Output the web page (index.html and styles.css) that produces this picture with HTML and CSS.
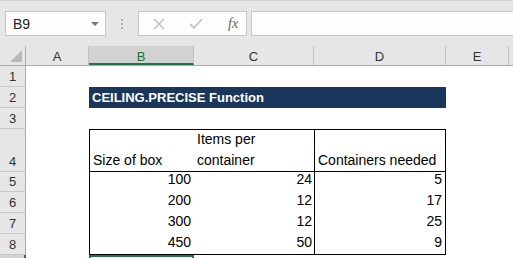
FILE: index.html
```html
<!DOCTYPE html>
<html lang="en">
<head>
    <meta charset="UTF-8">
    <title>CEILING.PRECISE Function</title>
    <link rel="stylesheet" href="styles.css">
</head>
<body>
    <div class="toolbar">
        <div class="name-box">
            <span>B9</span>
            <span class="caret"></span>
        </div>
        <div class="grip"><i></i><i></i><i></i></div>
        <div class="fn-box">
            <svg width="14" height="14" viewBox="0 0 14 14"><path d="M2 2 L12 12 M12 2 L2 12" stroke="#c4c4c4" stroke-width="1.6" fill="none"/></svg>
            <svg width="16" height="14" viewBox="0 0 16 14"><path d="M2 7 L6 11 L14 2" stroke="#c4c4c4" stroke-width="1.8" fill="none"/></svg>
            <span class="fx">fx</span>
        </div>
        <div class="formula"></div>
    </div>

    <div class="sheet">
        <div class="row head">
            <div class="rh corner"><span class="tri"></span></div>
            <div class="ch col-a">A</div>
            <div class="ch col-b active">B</div>
            <div class="ch col-c">C</div>
            <div class="ch col-d">D</div>
            <div class="ch col-e">E</div>
            <div class="ch rest"></div>
        </div>
        <div class="row">
            <div class="rh">1</div>
        </div>
        <div class="row">
            <div class="rh">2</div>
            <div class="col-a"></div>
            <div class="title">CEILING.PRECISE Function</div>
        </div>
        <div class="row">
            <div class="rh">3</div>
        </div>
        <div class="row tall">
            <div class="rh">4</div>
            <div class="col-a"></div>
            <div class="cell col-b top first">Size of box</div>
            <div class="cell col-c top">Items per<br>container</div>
            <div class="cell col-d top last">Containers needed</div>
        </div>
        <div class="row short">
            <div class="rh">5</div>
            <div class="col-a"></div>
            <div class="cell col-b num first">100</div>
            <div class="cell col-c num">24</div>
            <div class="cell col-d num last">5</div>
        </div>
        <div class="row">
            <div class="rh">6</div>
            <div class="col-a"></div>
            <div class="cell col-b num first">200</div>
            <div class="cell col-c num">12</div>
            <div class="cell col-d num last">17</div>
        </div>
        <div class="row">
            <div class="rh">7</div>
            <div class="col-a"></div>
            <div class="cell col-b num first">300</div>
            <div class="cell col-c num">12</div>
            <div class="cell col-d num last">25</div>
        </div>
        <div class="row">
            <div class="rh">8</div>
            <div class="col-a"></div>
            <div class="cell col-b num first bottom">450</div>
            <div class="cell col-c num bottom">50</div>
            <div class="cell col-d num last bottom">9</div>
        </div>
        <div class="row peek">
            <div class="rh sel"></div>
            <div class="col-a"></div>
            <div class="cell col-b picked"></div>
        </div>
    </div>
</body>
</html>
```

FILE: styles.css
```css
body {
    margin: 0;
    padding: 0;
    background-color: #ffffff;
    font-family: "Liberation Sans", Arial, sans-serif;
    overflow: hidden;
}
.toolbar {
    height: 46px;
    background-color: #e6e6e6;
    border-top: 1px solid #d4d4d4;
    box-sizing: border-box;
    display: flex;
    align-items: flex-start;
    padding-top: 10px;
    padding-left: 5px;
}
.name-box {
    width: 101px;
    height: 25px;
    box-sizing: border-box;
    background-color: #fdfdfd;
    border: 1px solid #c6c6c6;
    display: flex;
    align-items: center;
    justify-content: space-between;
    padding: 0 6px 0 7px;
    font-size: 14px;
    color: #222;
}
.caret {
    width: 0;
    height: 0;
    border-left: 4px solid transparent;
    border-right: 4px solid transparent;
    border-top: 4px solid #777;
}
.grip {
    width: 32px;
    height: 25px;
    display: flex;
    flex-direction: column;
    align-items: center;
    justify-content: center;
    gap: 2px;
}
.grip i {
    width: 2px;
    height: 2px;
    background-color: #b0b0b0;
}
.fn-box {
    width: 109px;
    height: 25px;
    box-sizing: border-box;
    background-color: #fdfdfd;
    border: 1px solid #c6c6c6;
    display: flex;
    align-items: center;
    padding-left: 13px;
    gap: 22px;
}
.fx {
    font-family: "Liberation Serif", "Times New Roman", serif;
    font-style: italic;
    font-size: 14px;
    color: #666;
    margin-left: 2px;
}
.formula {
    flex-grow: 1;
    height: 25px;
    box-sizing: border-box;
    margin-left: 4px;
    background-color: #fdfdfd;
    border: 1px solid #c6c6c6;
    border-right: none;
}
.sheet {
    display: flex;
    flex-direction: column;
}
.row {
    display: flex;
    height: 21px;
}
.row.head {
    height: 20px;
    background-color: #e6e6e6;
    border-bottom: 1px solid #ababab;
    box-sizing: border-box;
}
.row.tall {
    height: 43px;
}
.row.short {
    height: 20px;
}
.row.peek {
    height: 3px;
}
.rh {
    width: 26px;
    flex-shrink: 0;
    box-sizing: border-box;
    background-color: #e6e6e6;
    border-right: 1px solid #ababab;
    border-bottom: 1px solid #c8c8c8;
    color: #333;
    font-size: 13px;
    display: flex;
    align-items: flex-end;
    justify-content: center;
    padding-bottom: 2px;
}
.rh.corner {
    border-bottom: none;
    position: relative;
}
.tri {
    position: absolute;
    right: 3px;
    bottom: 3px;
    width: 0;
    height: 0;
    border-left: 12px solid transparent;
    border-bottom: 12px solid #b9b9b9;
}
.rh.sel {
    background-color: #d2d2d2;
    border-right: 2px solid #217346;
    border-bottom: none;
    padding: 0;
}
.ch {
    box-sizing: border-box;
    border-right: 1px solid #c0c0c0;
    color: #333;
    font-size: 13px;
    display: flex;
    align-items: center;
    justify-content: center;
    padding-top: 1px;
}
.ch.active {
    background-color: #d2d2d2;
    border-bottom: 2px solid #217346;
    color: #1e6b40;
    padding-top: 3px;
}
.ch.rest {
    border-right: none;
    flex-grow: 1;
}
.col-a { width: 63px; flex-shrink: 0; }
.col-b { width: 105px; flex-shrink: 0; }
.col-c { width: 120px; flex-shrink: 0; }
.col-d { width: 132px; flex-shrink: 0; }
.col-e { width: 63px; flex-shrink: 0; }
.title {
    width: 357px;
    background-color: #1a375b;
    color: #ffffff;
    font-weight: bold;
    font-size: 13px;
    display: flex;
    align-items: center;
    padding-left: 3px;
    box-sizing: border-box;
}
.cell {
    box-sizing: border-box;
    font-size: 14px;
    color: #000;
    display: flex;
    align-items: flex-end;
    padding: 0 3px 2px 3px;
    line-height: 21px;
}
.cell.first {
    border-left: 1px solid #000;
}
.cell.last {
    border-left: 1px solid #000;
    border-right: 1px solid #000;
}
.cell.top {
    border-top: 1px solid #000;
    border-bottom: 1px solid #000;
    padding-bottom: 0;
}
.cell.num {
    justify-content: flex-end;
}
.cell.col-c.num {
    padding-right: 2px;
}
.cell.bottom {
    border-bottom: 1px solid #000;
    padding-bottom: 1px;
}
.cell.picked {
    border: 2px solid #217346;
    border-bottom: none;
    padding: 0;
}
```
